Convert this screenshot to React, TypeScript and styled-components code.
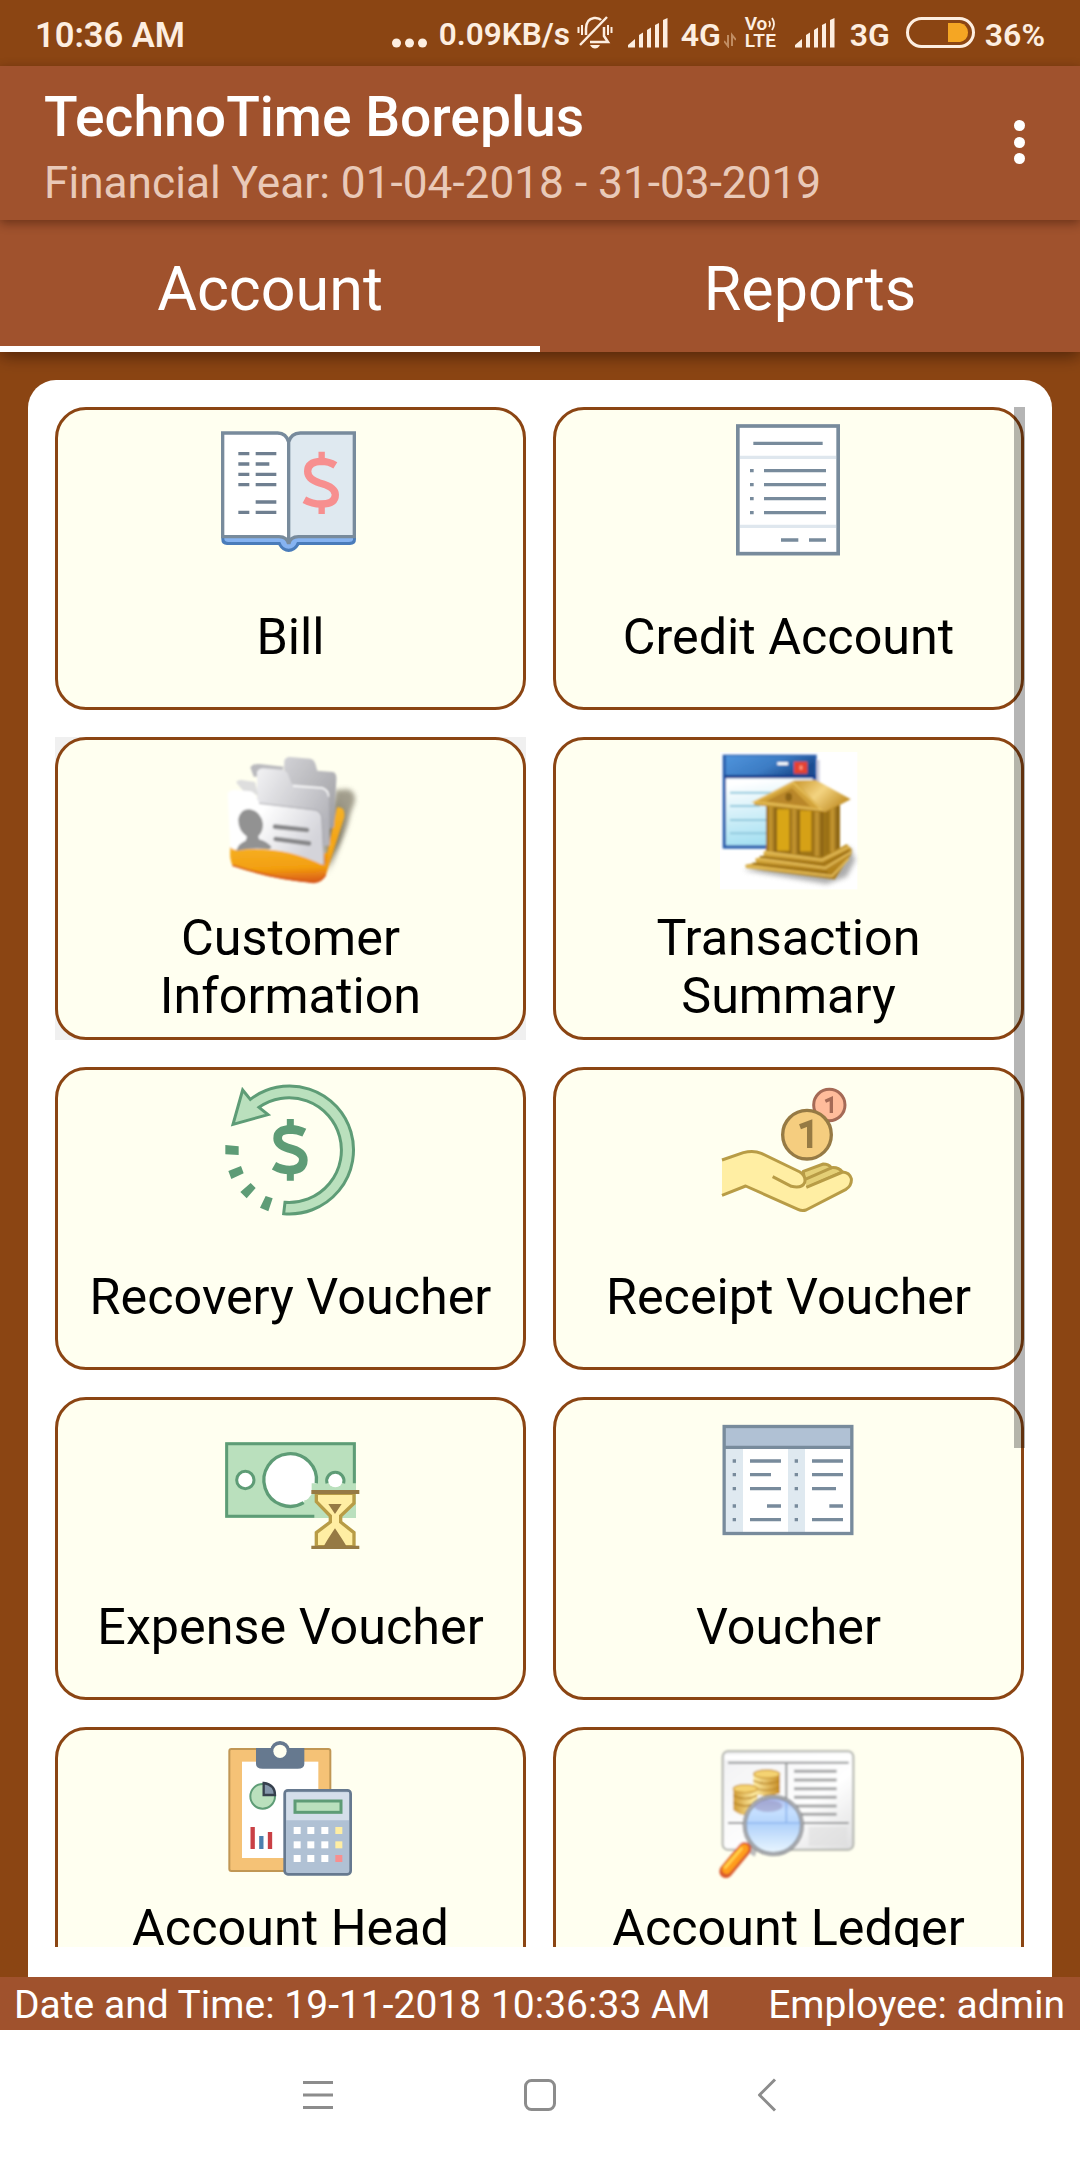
import React from 'react';
import styled, { createGlobalStyle } from 'styled-components';

const GlobalStyle = createGlobalStyle`
  html, body { margin: 0; padding: 0; background: #8b4513; }
  * { box-sizing: border-box; }
  body { font-family: Roboto, 'Noto Sans', sans-serif; }
`;

const Screen = styled.div`
  width: 1080px;
  height: 2160px;
  display: flex;
  flex-direction: column;
  overflow: hidden;
  background: #8b4513;
`;

/* ---------- status bar ---------- */

const StatusBar = styled.div`
  height: 66px;
  flex: none;
  display: flex;
  justify-content: space-between;
  align-items: center;
  padding: 3px 35px 0 35px;
  color: #fdeee0;
`;

const StatusText = styled.span<{ $width?: number; $left?: number; $size?: number }>`
  font-size: ${(p) => p.$size ?? 32}px;
  font-weight: 600;
  line-height: 40px;
  white-space: nowrap;
  width: ${(p) => (p.$width ? `${p.$width}px` : 'auto')};
  margin-left: ${(p) => p.$left ?? 0}px;
`;

const StatusGroup = styled.div`
  display: flex;
  align-items: center;
`;

const StatusGlyph = styled.svg<{ $left?: number }>`
  display: block;
  flex: none;
  margin-left: ${(p) => p.$left ?? 0}px;
  margin-top: -4px;
`;

const VolteMark = styled.span`
  display: flex;
  flex-direction: column;
  width: 34px;
  margin: -4px 0 0 9px;
  font-size: 19px;
  font-weight: 600;
  letter-spacing: 0.4px;
  line-height: 16.5px;
`;

const VolteTop = styled.span`
  display: flex;
  align-items: center;
  letter-spacing: -0.2px;
`;

/* ---------- app bar and tabs ---------- */

const AppBar = styled.header`
  height: 154px;
  flex: none;
  display: flex;
  justify-content: space-between;
  padding: 19px 55px 0 44px;
  background: #a0522d;
  box-shadow: 0 3px 10px rgba(40, 10, 0, 0.45);
  z-index: 2;
`;

const Title = styled.h1`
  margin: 0 0 8px;
  font-size: 55.2px;
  font-weight: 500;
  line-height: 64px;
  color: #fff;
`;

const Subtitle = styled.div`
  font-size: 44.2px;
  line-height: 52px;
  color: #e9c9b8;
`;

const MoreButton = styled.button`
  display: flex;
  flex-direction: column;
  gap: 5.5px;
  padding: 0;
  margin-top: 35px;
  border: 0;
  background: none;
`;

const MoreDot = styled.i`
  width: 11px;
  height: 11px;
  border-radius: 50%;
  background: #fff;
`;

const Tabs = styled.nav`
  height: 132px;
  flex: none;
  display: grid;
  grid-template-columns: 1fr 1fr;
  background: #a0522d;
  box-shadow: 0 4px 16px rgba(30, 10, 0, 0.55);
  z-index: 1;
`;

const Tab = styled.div<{ $active?: boolean }>`
  display: flex;
  align-items: center;
  justify-content: center;
  padding-top: 12px;
  border-bottom: 6px solid ${(p) => (p.$active ? '#fff' : 'transparent')};
  font-size: 61px;
  color: #fff;
`;

/* ---------- menu panel ---------- */

const Body = styled.main`
  flex: 1;
  min-height: 0;
  display: flex;
  padding: 28px 28px 0;
`;

const Panel = styled.section`
  flex: 1;
  padding: 27px 27px 30px 27px;
  border-radius: 28px 28px 0 0;
  background: #fff;
`;

const Viewport = styled.div`
  position: relative;
  height: 100%;
  overflow: hidden;
`;

const Grid = styled.div`
  display: grid;
  grid-template-columns: 471px 471px;
  grid-auto-rows: 303px;
  gap: 27px;
`;

const ScrollThumb = styled.div`
  position: absolute;
  top: 0;
  right: 0;
  width: 11px;
  height: 1041px;
  background: rgba(0, 0, 0, 0.29);
`;

const Cell = styled.div<{ $focused?: boolean }>`
  display: flex;
  background: ${(p) => (p.$focused ? '#f0f0f0' : 'transparent')};
`;

const Card = styled.div`
  flex: 1;
  display: flex;
  flex-direction: column;
  align-items: center;
  padding-top: 12px;
  border: 3px solid #8b4513;
  border-radius: 31px;
  background: #fffff0;
`;

const Picture = styled.svg`
  display: block;
  flex: none;
  width: 137.33px;
  height: 137.33px;
  overflow: visible;
`;

const Label = styled.div<{ $top?: boolean }>`
  height: 116px;
  margin-top: 20px;
  display: flex;
  align-items: ${(p) => (p.$top ? 'flex-start' : 'center')};
  text-align: center;
  white-space: pre-line;
  font-size: 50.3px;
  line-height: 58px;
  color: #000;
`;

/* ---------- footer and navigation ---------- */

const Footer = styled.footer`
  height: 53px;
  flex: none;
  display: flex;
  align-items: center;
  justify-content: space-between;
  padding: 4px 15px 0 14px;
  background: #a0522d;
  color: #fff;
  font-size: 39px;
  line-height: 49px;
`;

const NavBar = styled.div`
  height: 130px;
  flex: none;
  display: flex;
  align-items: center;
  justify-content: center;
  gap: 190px;
  background: #fff;
`;

/* ---------- icons: each is drawn in a 412-unit square ---------- */

const BookIcon = () => (
  <Picture viewBox="65 36 412 412">
    <path d="M63 378H467V388Q467 405 449 405H297Q284 426 265 426Q246 426 234 405H80Q63 405 63 388Z" fill="#4a7cba" />
    <path d="M72 380H458V390Q456 396 446 396H290Q283 416 265 416Q247 416 240 396H84Q74 396 72 388Z" fill="#86b3f1" />
    <path d="M67 69H232Q258 70 265 96V402Q260 380 236 380H67Z" fill="#fff" stroke="#788b9c" strokeWidth="10" />
    <path d="M462 69H300Q272 70 265 96V402Q270 380 294 380H462Z" fill="#dfe9f0" stroke="#788b9c" strokeWidth="10" />
    <path d="M114 131h33M166 131h62M114 162h33M166 162h41M114 193h33M166 193h62M114 224h33M166 224h62M166 276h62M114 307h33M166 307h62" stroke="#6f7f90" strokeWidth="10" />
    <path d="M364 125V150M364 288V312" stroke="#f78f8f" strokeWidth="19" />
    <path d="M405 166Q386 154 363 154Q322 155 322 184Q322 208 358 219Q405 231 405 254Q405 282 362 282Q336 282 312 269" fill="none" stroke="#f78f8f" strokeWidth="22" />
  </Picture>
);

const DocumentIcon = () => (
  <Picture viewBox="60 66 412 412">
    <rect x="113.500" y="78" width="301" height="383" fill="#fff" stroke="#788b9c" strokeWidth="11" />
    <path d="M120 172H408M120 379H408" stroke="#dfe7ee" strokeWidth="10" />
    <path d="M160 130H368M192 212H378M192 254H378M192 296H378M192 338H378M150 212h11M150 254h11M150 296h11M150 338h11M243 420h52M327 420h51" stroke="#788b9c" strokeWidth="10" />
  </Picture>
);

const FoldersIcon = () => (
  <Picture viewBox="65 66 412 412">
    <defs>
      <linearGradient id="folderBack" x1="0" y1="0" x2="1" y2="1">
        <stop offset="0" stopColor="#d2d2d6" /><stop offset="1" stopColor="#9c9ca0" />
      </linearGradient>
      <linearGradient id="folderMid" x1="0" y1="0" x2="1" y2="0.6">
        <stop offset="0" stopColor="#f2f2f4" /><stop offset="1" stopColor="#b4b4ba" />
      </linearGradient>
      <linearGradient id="folderFront" x1="0" y1="0" x2="1" y2="0.5">
        <stop offset="0.4" stopColor="#ffffff" /><stop offset="1" stopColor="#d4d4da" />
      </linearGradient>
      <linearGradient id="folderOrange" x1="0" y1="0" x2="0.1" y2="1">
        <stop offset="0" stopColor="#f6b52a" /><stop offset="0.7" stopColor="#f39f10" /><stop offset="1" stopColor="#dd6414" />
      </linearGradient>
      <radialGradient id="folderShadow">
        <stop offset="0" stopColor="#5c5540" stopOpacity="0.9" /><stop offset="0.6" stopColor="#77705c" stopOpacity="0.5" /><stop offset="1" stopColor="#fffff0" stopOpacity="0" />
      </radialGradient>
      <filter id="soft" x="-20%" y="-20%" width="140%" height="140%"><feGaussianBlur stdDeviation="2.8" /></filter>
      <filter id="softer" x="-40%" y="-40%" width="180%" height="180%"><feGaussianBlur stdDeviation="8" /></filter>
    </defs>
    <path d="M395 168L448 170Q476 180 468 218L382 440L330 455Z" fill="url(#folderShadow)" filter="url(#softer)" />
    <path d="M405 180L445 178Q470 190 462 220L410 345L380 390Z" fill="#8b8674" opacity="0.8" filter="url(#softer)" />
    <g filter="url(#soft)">
      <path d="M410 232Q436 228 432 262L378 430Q368 456 340 458Q210 448 100 408Q88 400 90 352L380 370Z" fill="url(#folderOrange)" />
      <path d="M252 92Q256 80 270 81L330 86Q342 88 346 104L351 122L398 126Q410 130 408 150L401 290L380 300L250 150Z" fill="url(#folderBack)" />
      <path d="M150 112Q158 100 176 102L250 110L240 140H160Z" fill="#b9b9bd" />
      <path d="M170 126Q176 114 190 115L246 119Q260 122 264 136L274 162L366 172Q384 178 385 200L388 345L366 350L170 220Z" fill="url(#folderMid)" />
      <path d="M278 168L366 174Q384 180 385 200" fill="none" stroke="#fff" strokeWidth="4" />
      <path d="M108 158Q110 148 124 150L164 156L174 196L130 184Z" fill="#dedede" />
      <path d="M82 190Q90 178 104 180L152 184Q164 188 168 204L178 220L346 242Q362 248 363 266L370 404L300 390Q200 350 90 364Z" fill="url(#folderFront)" />
      <path d="M176 220L346 240Q364 246 365 266L371 404" fill="none" stroke="#a9a9ae" strokeWidth="3" />
      <path d="M90 350Q100 364 130 358Q260 350 368 406Q382 410 388 348L400 330L378 430Q368 456 340 458Q210 446 100 408Q88 400 90 350Z" fill="url(#folderOrange)" />
      <path d="M96 406Q220 446 340 457Q364 456 376 434" fill="none" stroke="#d5551c" strokeWidth="5" />
      <path d="M114 266Q122 236 148 238Q182 244 188 282Q188 306 174 318L176 328Q200 334 214 352L206 358Q160 352 108 362Q114 340 136 332L140 320Q112 300 114 266Z" fill="#929292" />
      <path d="M224 290L320 300M226 327L326 340" stroke="#88888a" strokeWidth="14" strokeLinecap="round" />
    </g>
  </Picture>
);

const BankIcon = () => (
  <Picture viewBox="60 66 412 412">
    <defs>
      <linearGradient id="winBar" x1="0" y1="0" x2="1" y2="0.4">
        <stop offset="0" stopColor="#4f94dc" /><stop offset="0.6" stopColor="#3c7cc4" /><stop offset="1" stopColor="#1c4c90" />
      </linearGradient>
      <linearGradient id="winBody" x1="0" y1="0" x2="0.2" y2="1">
        <stop offset="0.1" stopColor="#fff" /><stop offset="1" stopColor="#a6e0f2" />
      </linearGradient>
      <linearGradient id="gold" x1="0" y1="0" x2="1" y2="1">
        <stop offset="0" stopColor="#e2b748" /><stop offset="1" stopColor="#a67412" />
      </linearGradient>
      <linearGradient id="roof" x1="0" y1="0" x2="1" y2="0.6">
        <stop offset="0" stopColor="#c9962c" /><stop offset="0.5" stopColor="#f4d481" /><stop offset="1" stopColor="#c28f26" />
      </linearGradient>
      <linearGradient id="column" x1="0" y1="0" x2="1" y2="0">
        <stop offset="0" stopColor="#8f6510" /><stop offset="0.45" stopColor="#c99a34" /><stop offset="1" stopColor="#7c560b" />
      </linearGradient>
    </defs>
    <rect x="60" y="66" width="412" height="412" fill="#fff" />
    <path d="M130 420L380 462L440 440L466 390L450 350L430 370Z" fill="#777" opacity="0.6" filter="url(#softer)" />
    <g filter="url(#soft)">
      <rect x="68" y="74" width="282" height="282" fill="#2c5ead" />
      <path d="M355 90V220" stroke="#ccd" strokeWidth="8" />
      <rect x="78" y="78" width="266" height="58" fill="url(#winBar)" />
      <path d="M74 139H348" stroke="#173e8c" strokeWidth="8" />
      <rect x="78" y="145" width="260" height="201" fill="url(#winBody)" />
      <path d="M90 188H216M90 228H180M90 270H200M90 310H200" stroke="#91c9dd" strokeWidth="6" />
      <path d="M232 101H264" stroke="#fff" strokeWidth="9" />
      <rect x="282" y="95" width="40" height="36" fill="#e54332" />
      <path d="M303 107V119" stroke="#ff9d80" strokeWidth="8" />
      <path d="M198 226L368 246L420 218V356L384 400L198 366Z" fill="#9e7316" />
      <rect x="230" y="238" width="40" height="124" fill="#d9a616" />
      <rect x="298" y="242" width="36" height="122" fill="#d6a114" />
      <rect x="198" y="230" width="32" height="136" fill="url(#column)" />
      <rect x="268" y="236" width="32" height="136" fill="url(#column)" />
      <rect x="336" y="240" width="33" height="138" fill="url(#column)" />
      <rect x="382" y="228" width="34" height="138" fill="url(#column)" />
      <path d="M280 152L346 150L450 208L376 248L162 225V214Z" fill="url(#gold)" />
      <path d="M282 152L346 150L452 208L374 246Z" fill="url(#roof)" />
      <path d="M162 216L280 158L365 240Z" fill="#d2a33a" stroke="#e8c15d" strokeWidth="5" />
      <path d="M198 214L276 174L332 230Z" fill="#b9872a" />
      <ellipse cx="266" cy="201" rx="10" ry="13" fill="#8d6315" />
      <path d="M192 362L366 384L440 342L455 358L454 372L404 448L138 414L136 404L168 398L166 386L190 378Z" fill="url(#gold)" />
      <path d="M192 366L366 390L448 350M170 386L376 414L454 366M140 408L396 438L446 386" fill="none" stroke="#e2bb58" strokeWidth="6" />
      <path d="M180 380L370 403L448 362M158 400L384 428" fill="none" stroke="#94680e" strokeWidth="5" />
    </g>
  </Picture>
);

const RecoveryIcon = () => (
  <Picture viewBox="65 36 412 412">
    <path d="M150 88A192 192 0 1 1 250 431L254 397A157 157 0 1 0 176 112L203 134L98 163L127 60Z" fill="#bae0bd" stroke="#5e9c76" strokeWidth="9" />
    <path d="M75 225L115 229V255L75 253ZM84 303L122 288L130 310L93 327ZM120 366L151 339L166 354L139 385ZM179 413L196 378L217 385L204 424Z" fill="#5e9c76" />
    <path d="M270 147V174M270 306V332" stroke="#5e9c76" strokeWidth="21" />
    <path d="M312 188Q292 178 271 178Q231 179 232 205Q232 225 265 235Q309 245 309 270Q308 300 268 300Q244 300 221 287" fill="none" stroke="#5e9c76" strokeWidth="26" />
  </Picture>
);

const HandIcon = () => (
  <Picture viewBox="60 36 412 412">
    <circle cx="388" cy="105" r="47" fill="#ffbc9b" stroke="#a56a56" strokeWidth="9" />
    <path d="M376 94L394 86V129" fill="none" stroke="#a56a56" strokeWidth="10" />
    <circle cx="321" cy="194" r="73" fill="#f5cd7f" stroke="#967a44" strokeWidth="10" />
    <path d="M300 170L329 159V234" fill="none" stroke="#967a44" strokeWidth="16" />
    <path d="M310 304L370 282Q385 282 394 293Q416 291 427 306L315 356Z" fill="#e4cf76" stroke="#b89c46" strokeWidth="9" strokeLinejoin="round" />
    <path d="M66 270L130 248Q160 240 184 250L300 306Q317 316 318 335L319 352L432 306Q456 314 454 334Q452 350 438 358L318 420Q306 424 294 418L137 348L66 376Z" fill="#ffeea3" />
    <path d="M66 270L130 248Q160 240 184 250L300 306Q319 319 314 338Q306 356 274 349L218 320M66 376L137 348L294 418Q306 424 318 420L438 358Q456 346 454 326Q448 307 428 306L319 352M312 330L394 294" fill="none" stroke="#b89c46" strokeWidth="9" strokeLinejoin="round" />
  </Picture>
);

const CashIcon = () => (
  <Picture viewBox="65 6 412 412">
    <path d="M75 97H467V324H75Z" fill="#bae0bd" />
    <path d="M462 220V101H79V319H342" fill="none" stroke="#5e9c76" strokeWidth="9" />
    <circle cx="135" cy="210" r="26" fill="#fff" stroke="#5e9c76" strokeWidth="9" />
    <circle cx="270" cy="210" r="77" fill="#fff" />
    <path d="M348 220A79 79 0 1 0 310 278" fill="none" stroke="#5e9c76" strokeWidth="10" />
    <circle cx="405" cy="210" r="22" fill="#fff" />
    <path d="M380 220A26 26 0 1 1 430 220" fill="none" stroke="#5e9c76" strokeWidth="9" />
    <path d="M334 220H348V240H334ZM312 270L344 276V305L316 290Z" fill="#bae0bd" />
    <path d="M348 250V275L390 318V336L348 368V410H461V368L421 336V318L461 280V250Z" fill="#ffeea3" stroke="#b89c46" strokeWidth="10" />
    <path d="M384 282H424L404 312ZM370 410Q374 400 404 355Q434 400 439 410ZM333 240H477V252H333ZM333 407H477V417H333Z" fill="#967a44" />
  </Picture>
);

const TableIcon = () => (
  <Picture viewBox="60 6 412 412">
    <rect x="72" y="50" width="384" height="320" fill="#fff" />
    <rect x="72" y="50" width="384" height="62" fill="#b0c1d4" />
    <path d="M78 112H129V370H78ZM264 112H315V370H264Z" fill="#dfe9f0" />
    <rect x="72.500" y="49.500" width="383" height="321" fill="none" stroke="#788b9c" strokeWidth="10" />
    <path d="M72 112H456M98 153h10M150 153h93M284 153h10M336 153h93M98 194h10M150 194h63M284 194h10M336 194h93M98 236h10M150 236h93M284 236h10M336 236h72M98 288h10M201 288h42M284 288h10M388 288h41M98 329h10M150 329h93M284 329h10M336 329h93" stroke="#788b9c" strokeWidth="10" />
  </Picture>
);

const KEY_COLUMNS = [290, 331, 373, 415];
const KEY_ROWS = [331, 374, 415];

const ClipboardIcon = () => (
  <Picture viewBox="65 66 412 412">
    <rect x="87" y="87" width="303" height="366" rx="6" fill="#f5c276" stroke="#c19754" strokeWidth="6" />
    <rect x="125" y="125" width="229" height="289" fill="#fff" />
    <path d="M167 84H212A28 23 0 0 1 267 84H312V132Q312 146 292 146H187Q167 146 167 132Z" fill="#66798f" />
    <circle cx="239" cy="92" r="29" fill="#66798f" />
    <circle cx="239" cy="94" r="20" fill="#fffff0" />
    <circle cx="187" cy="229" r="37" fill="#bae0bd" stroke="#5e9c76" strokeWidth="6" />
    <path d="M190 189Q224 194 224 225H190Z" fill="#8496aa" stroke="#36404d" strokeWidth="7" />
    <path d="M157 321V387M209 336V387" stroke="#c94045" strokeWidth="13" />
    <path d="M183 348V387" stroke="#4d80ae" strokeWidth="13" />
    <rect x="253" y="211" width="198" height="252" rx="10" fill="#b0c1d4" stroke="#66798f" strokeWidth="8" />
    <path d="M258 217H446V301H258Z" fill="#d4deea" />
    <rect x="284" y="243" width="138" height="34" fill="#bae0bd" stroke="#5e9c76" strokeWidth="9" />
    {KEY_ROWS.map((y, r) =>
      KEY_COLUMNS.map((x, c) => (
        <rect key={`${x}-${y}`} x={x - 10} y={y - 10} width="21" height="21"
          fill={c < 3 ? '#fff' : r === 2 ? '#f78f8f' : '#ffeea3'} />
      )),
    )}
  </Picture>
);

const LedgerIcon = () => (
  <Picture viewBox="60 66 412 412">
    <defs>
      <linearGradient id="page" x1="0" y1="0" x2="1" y2="1">
        <stop offset="0" stopColor="#f1f1f3" /><stop offset="0.6" stopColor="#fff" /><stop offset="1" stopColor="#dededf" />
      </linearGradient>
      <linearGradient id="coin" x1="0" y1="0" x2="1" y2="0">
        <stop offset="0" stopColor="#cf9a35" /><stop offset="0.45" stopColor="#ffec9f" /><stop offset="1" stopColor="#c68c25" />
      </linearGradient>
      <linearGradient id="lens" x1="0" y1="0" x2="0" y2="1">
        <stop offset="0" stopColor="#a9b6ec" /><stop offset="0.25" stopColor="#c6e0ff" /><stop offset="0.5" stopColor="#b3d3fb" /><stop offset="1" stopColor="#ecf8ff" />
      </linearGradient>
    </defs>
    <g filter="url(#soft)">
      <rect x="68" y="94" width="392" height="295" rx="16" fill="url(#page)" stroke="#b0b2ac" strokeWidth="6" />
      <path d="M75 104H452V119H75Z" fill="#fff" />
      <path d="M84 128H446M84 309H446M259 128V309" stroke="#959799" strokeWidth="6" />
      <path d="M282 154H410M282 180H410M282 206H410M282 232H410M282 258H410M282 283H410" stroke="#a4a5a6" strokeWidth="9" />
      <path d="M326 320H442V378H326Z" fill="#ddd" opacity="0.6" />
      <path d="M160 160V220Q198 236 240 220V160ZM100 204V270Q132 298 172 276V204Z" fill="url(#coin)" />
      <path d="M160 182Q198 200 240 182M160 202Q198 220 240 202M100 226Q135 246 172 226M100 248Q135 268 172 248" fill="none" stroke="#b98628" strokeWidth="4" />
      <ellipse cx="200" cy="162" rx="39" ry="12" fill="#f5d372" stroke="#d0a040" strokeWidth="4" />
      <ellipse cx="136" cy="206" rx="36" ry="12" fill="#f5d372" stroke="#d0a040" strokeWidth="4" />
      <path d="M145 388L169 370L160 398Z" fill="#bbb" stroke="#bcbcbc" strokeWidth="16" />
      <path d="M134 386L78 454" stroke="#d9582c" strokeWidth="40" strokeLinecap="round" />
      <path d="M132 386L80 448" stroke="#ff9d1b" strokeWidth="28" strokeLinecap="round" />
      <path d="M124 386L76 442" stroke="#ffd04a" strokeWidth="9" strokeLinecap="round" />
      <circle cx="220" cy="316" r="86" fill="url(#lens)" stroke="#808388" strokeWidth="12" />
      <circle cx="220" cy="316" r="86" fill="none" stroke="#c4c7cc" strokeWidth="4" />
      <path d="M140 309H300M259 245V309" stroke="#8fb6ee" strokeWidth="5" />
      <ellipse cx="205" cy="258" rx="42" ry="18" fill="#9893bd" opacity="0.55" />
    </g>
  </Picture>
);

/* ---------- status glyphs ---------- */

const Signal = ({ left }: { left: number }) => (
  <StatusGlyph $left={left} width="40" height="30" viewBox="0 0 40 30" fill="#fdeee0">
    <path d="M0 29.500V27L7 21V29.500ZM11 17L15 14.500V29.500H11ZM19 12L23 9.500V29.500H19ZM27 7L31 5V29.500H27ZM35 2L39.500 0V29.500H35Z" />
  </StatusGlyph>
);

const MutedBell = () => (
  <StatusGlyph $left={6} width="36" height="33" viewBox="0 0 36 33" fill="none" stroke="#fdeee0" strokeWidth="2.500">
    <path d="M30 1L3 29M9 19V13Q9 3 17 2Q22 1.500 24 4M27 11V20L31 26H13" />
    <path d="M1.500 11V17M5 9V19M31 9V19M34.500 11V17" strokeWidth="2" />
    <path d="M13 29H23Q21 32.500 18 32.500Q15 32.500 13 29Z" fill="#fdeee0" stroke="none" />
  </StatusGlyph>
);

const ITEMS = [
  { label: 'Bill', Icon: BookIcon },
  { label: 'Credit Account', Icon: DocumentIcon },
  { label: 'Customer\nInformation', Icon: FoldersIcon, focused: true },
  { label: 'Transaction\nSummary', Icon: BankIcon },
  { label: 'Recovery Voucher', Icon: RecoveryIcon },
  { label: 'Receipt Voucher', Icon: HandIcon },
  { label: 'Expense Voucher', Icon: CashIcon },
  { label: 'Voucher', Icon: TableIcon },
  { label: 'Account Head', Icon: ClipboardIcon, top: true },
  { label: 'Account Ledger', Icon: LedgerIcon, top: true },
];

export default function App() {
  return (
    <Screen>
      <GlobalStyle />
      <StatusBar>
        <StatusText $size={34.5}>10:36 AM</StatusText>
        <StatusGroup>
          <StatusGlyph width="36" height="30" viewBox="0 0 36 30" fill="#fdeee0">
            <circle cx="4.500" cy="25" r="4.500" /><circle cx="17.500" cy="25" r="4.500" /><circle cx="30.500" cy="25" r="4.500" />
          </StatusGlyph>
          <StatusText $left={11} $width={132} $size={31.5}>0.09KB/s</StatusText>
          <MutedBell />
          <Signal left={15} />
          <StatusText $left={13} $width={40}>4G</StatusText>
          <StatusGlyph $left={3} width="12" height="30" viewBox="0 0 12 30" fill="none" stroke="#c08c62" strokeWidth="2">
            <path d="M4 17V28L0 23M8 28V17L12 22" />
          </StatusGlyph>
          <VolteMark>
            <VolteTop>
              Vo
              <svg width="9" height="14" viewBox="0 0 9 14" fill="none" stroke="#fdeee0" strokeWidth="1.800">
                <path d="M2 4Q4 7 2 10M5 1Q9 7 5 13" />
              </svg>
            </VolteTop>
            <span>LTE</span>
          </VolteMark>
          <Signal left={16} />
          <StatusText $left={15} $width={40}>3G</StatusText>
          <StatusGlyph $left={16} width="69" height="31" viewBox="0 0 69 31">
            <rect x="1.500" y="1.500" width="66" height="28" rx="14" fill="none" stroke="#fdeee0" strokeWidth="3" />
            <path d="M42 6H54Q62 8 62 15.500Q62 23 54 25H42Z" fill="#f5a623" />
          </StatusGlyph>
          <StatusText $left={10}>36%</StatusText>
        </StatusGroup>
      </StatusBar>

      <AppBar>
        <div>
          <Title>TechnoTime Boreplus</Title>
          <Subtitle>Financial Year: 01-04-2018 - 31-03-2019</Subtitle>
        </div>
        <MoreButton aria-label="More options">
          <MoreDot /><MoreDot /><MoreDot />
        </MoreButton>
      </AppBar>

      <Tabs>
        <Tab $active>Account</Tab>
        <Tab>Reports</Tab>
      </Tabs>

      <Body>
        <Panel>
          <Viewport>
            <Grid>
              {ITEMS.map(({ label, Icon, focused, top }) => (
                <Cell key={label} $focused={focused}>
                  <Card>
                    <Icon />
                    <Label $top={top}>{label}</Label>
                  </Card>
                </Cell>
              ))}
            </Grid>
            <ScrollThumb />
          </Viewport>
        </Panel>
      </Body>

      <Footer>
        <span>Date and Time: 19-11-2018 10:36:33 AM</span>
        <span>Employee: admin</span>
      </Footer>

      <NavBar>
        <svg width="32" height="34" viewBox="0 0 32 34" fill="none" stroke="#8c8c8c" strokeWidth="3">
          <path d="M1 4.500H31M1 17H31M1 29.500H31" />
        </svg>
        <svg width="32" height="34" viewBox="0 0 32 34" fill="none" stroke="#8c8c8c" strokeWidth="3">
          <rect x="1.500" y="2.500" width="29" height="29" rx="6" />
        </svg>
        <svg width="32" height="34" viewBox="0 0 32 34" fill="none" stroke="#8c8c8c" strokeWidth="3">
          <path d="M29 1.500L13.500 17L29 32.500" strokeLinejoin="round" />
        </svg>
      </NavBar>
    </Screen>
  );
}
